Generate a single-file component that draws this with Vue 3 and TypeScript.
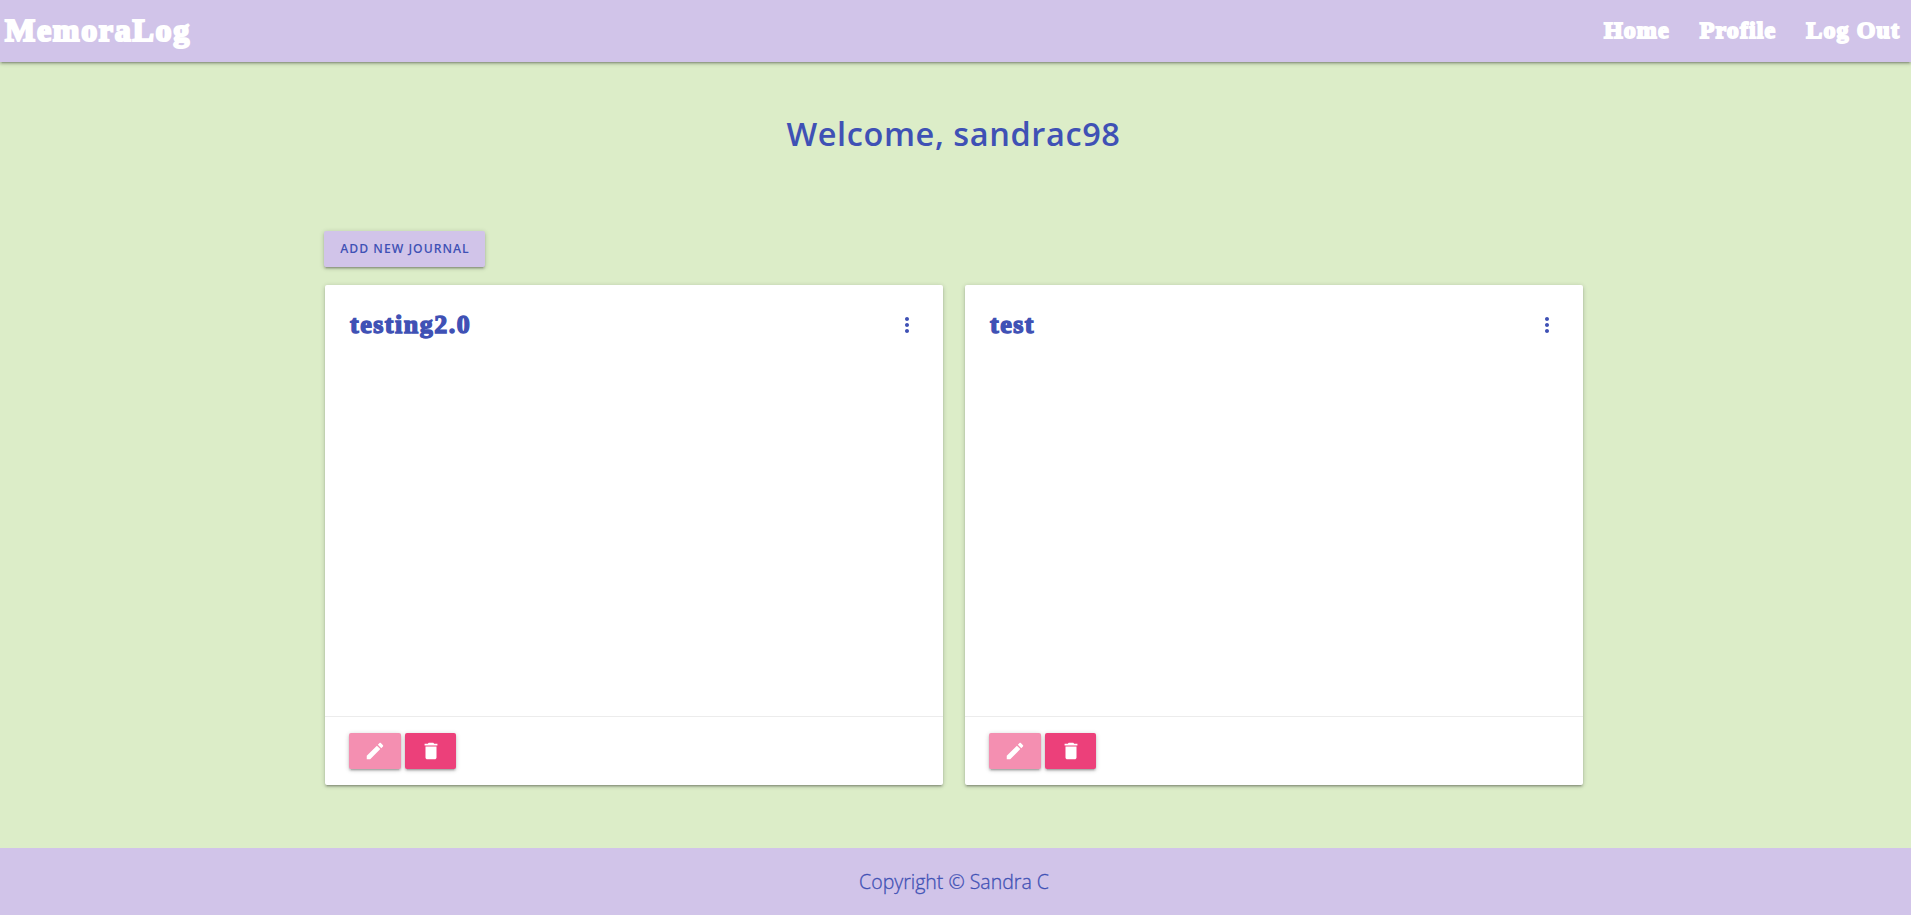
<script setup lang="ts">
interface Journal {
  id: number
  title: string
}

const username = 'sandrac98'
const links: string[] = ['Home', 'Profile', 'Log Out']
const journals: Journal[] = [
  { id: 1, title: 'testing2.0' },
  { id: 2, title: 'test' },
]
</script>

<template>
  <div class="page">
    <header class="navbar">
      <a class="brand">MemoraLog</a>
      <nav class="links">
        <a v-for="link in links" :key="link" class="link">{{ link }}</a>
      </nav>
    </header>

    <main class="main">
      <h1 class="welcome">Welcome, {{ username }}</h1>
      <button class="btn add">Add new journal</button>
      <section class="cards">
        <article v-for="journal in journals" :key="journal.id" class="card">
          <div class="content">
            <h2 class="title">{{ journal.title }}</h2>
            <svg class="more" viewBox="0 0 24 24">
              <path d="M12 8c1.1 0 2-.9 2-2s-.9-2-2-2-2 .9-2 2 .9 2 2 2zm0 2c-1.1 0-2 .9-2 2s.9 2 2 2 2-.9 2-2-.9-2-2-2zm0 6c-1.1 0-2 .9-2 2s.9 2 2 2 2-.9 2-2-.9-2-2-2z" />
            </svg>
          </div>
          <div class="actions">
            <button class="btn edit" aria-label="Edit">
              <svg class="icon" viewBox="0 0 24 24">
                <path d="M3 17.25V21h3.75L17.81 9.94l-3.75-3.75L3 17.25zM20.71 7.04c.39-.39.39-1.02 0-1.41l-2.34-2.34c-.39-.39-1.02-.39-1.41 0l-1.83 1.83 3.75 3.75 1.83-1.83z" />
              </svg>
            </button>
            <button class="btn remove" aria-label="Delete">
              <svg class="icon" viewBox="0 0 24 24">
                <path d="M6 19c0 1.1.9 2 2 2h8c1.1 0 2-.9 2-2V7H6v12zM19 4h-3.5l-1-1h-5l-1 1H5v2h14V4z" />
              </svg>
            </button>
          </div>
        </article>
      </section>
    </main>

    <footer class="footer">Copyright © Sandra C</footer>
  </div>
</template>

<style>
body {
  margin: 0;
}
</style>

<style scoped>
.page {
  box-sizing: border-box;
  display: flex;
  flex-direction: column;
  height: 915px;
  background: #dcedc8;
  color: #3f51b5;
  font-family: "Open Sans", sans-serif;
}
.navbar {
  display: flex;
  align-items: flex-start;
  justify-content: space-between;
  height: 62px;
  flex: none;
  background: #d1c4e9;
  color: #fff;
  font-family: "Liberation Serif", serif;
  font-weight: 700;
  box-shadow: 0 2px 2px 0 rgba(0, 0, 0, 0.14), 0 3px 1px -2px rgba(0, 0, 0, 0.12), 0 1px 5px 0 rgba(0, 0, 0, 0.2);
}
.brand {
  padding-left: 5px;
  font-size: 32px;
  line-height: 60px;
  letter-spacing: 1.7px;
  -webkit-text-stroke: 2.2px #fff;
}
.links {
  display: flex;
  gap: 30px;
  padding-right: 11px;
}
.link {
  font-size: 24px;
  line-height: 60px;
  letter-spacing: 1.1px;
  white-space: nowrap;
  -webkit-text-stroke: 1.8px #fff;
}
.main {
  flex: 1;
  width: 1258px;
  margin-left: 325px;
}
.welcome {
  margin: 49px 0 0 -1px;
  font-size: 32.5px;
  line-height: 46px;
  font-weight: 600;
  text-align: center;
  letter-spacing: 0.6px;
}
.btn {
  display: flex;
  align-items: center;
  justify-content: center;
  height: 36px;
  padding: 0;
  border: 0;
  border-radius: 2px;
  color: inherit;
  box-shadow: 0 2px 2px 0 rgba(0, 0, 0, 0.14), 0 3px 1px -2px rgba(0, 0, 0, 0.12), 0 1px 5px 0 rgba(0, 0, 0, 0.2);
}
.add {
  width: 161px;
  margin: 74px 0 0 -1px;
  padding: 0 0 2px 1px;
  background: #d1c4e9;
  font-family: "Open Sans", sans-serif;
  font-size: 12.2px;
  font-weight: 600;
  letter-spacing: 1px;
  text-transform: uppercase;
}
.cards {
  display: grid;
  grid-template-columns: 1fr 1fr;
  gap: 22px;
  margin-top: 18px;
}
.card {
  display: flex;
  flex-direction: column;
  height: 500px;
  background: #fff;
  border-radius: 2px;
  box-shadow: 0 2px 2px 0 rgba(0, 0, 0, 0.14), 0 3px 1px -2px rgba(0, 0, 0, 0.12), 0 1px 5px 0 rgba(0, 0, 0, 0.2);
}
.content {
  display: flex;
  flex: 1;
  align-items: flex-start;
  justify-content: space-between;
  padding: 24px 24px 24px 25px;
}
.title {
  margin: 0;
  font-family: "Liberation Serif", serif;
  font-size: 26px;
  line-height: 32px;
  font-weight: 700;
  letter-spacing: 1.5px;
  -webkit-text-stroke: 1.4px #3f51b5;
}
.more {
  width: 24px;
  height: 24px;
  margin-top: 4px;
  fill: #3f51b5;
}
.actions {
  display: flex;
  gap: 4px;
  padding: 16px 24px;
  border-top: 1px solid rgba(160, 160, 160, 0.2);
}
.edit {
  width: 52px;
  background: #f48fb1;
}
.remove {
  width: 51px;
  background: #ec407a;
}
.icon {
  width: 22px;
  height: 22px;
  fill: #fff;
}
.footer {
  flex: none;
  height: 67px;
  padding-right: 3px;
  background: #d1c4e9;
  font-size: 19.5px;
  line-height: 67px;
  font-weight: 300;
  text-align: center;
  -webkit-text-stroke: 0.3px #3f51b5;
}
</style>
